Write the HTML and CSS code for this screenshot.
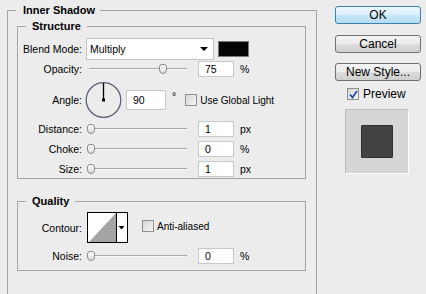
FILE: index.html
```html
<!DOCTYPE html>
<html lang="en">

<head>
    <meta charset="UTF-8">
    <title>Layer Style - Inner Shadow</title>
    <link rel="stylesheet" href="styles.css">
</head>

<body>
    <div class="left">
        <fieldset class="outer">
            <legend>Inner Shadow</legend>

            <!-- Structure -->
            <fieldset class="group structure">
                <legend>Structure</legend>
                <div class="row blend-row">
                    <span class="lbl">Blend Mode:</span>
                    <div class="select"><span>Multiply</span><span class="caret"></span></div>
                    <div class="color-swatch"></div>
                </div>
                <div class="row opacity-row">
                    <span class="lbl">Opacity:</span>
                    <div class="slider"><div class="thumb" style="left: 70px"></div></div>
                    <div class="num">75</div><span class="unit">%</span>
                </div>
                <div class="row angle-row">
                    <span class="lbl">Angle:</span>
                    <svg class="dial" width="37" height="36" viewBox="0 0 37 36">
                        <circle cx="18.5" cy="18" r="17.3" fill="none" stroke="#5c6070" stroke-width="1.3" />
                        <line x1="18.5" y1="1" x2="18.5" y2="18" stroke="#000" stroke-width="1.3" />
                        <rect x="17" y="16.5" width="3" height="3" fill="#000" />
                    </svg>
                    <div class="num angle-num">90</div>
                    <span class="deg">&deg;</span>
                    <span class="check"></span>
                    <span class="check-lbl">Use Global Light</span>
                </div>
                <div class="row dist-row">
                    <span class="lbl">Distance:</span>
                    <div class="slider"><div class="thumb" style="left: -2px"></div></div>
                    <div class="num">1</div><span class="unit">px</span>
                </div>
                <div class="row sub-row">
                    <span class="lbl">Choke:</span>
                    <div class="slider"><div class="thumb" style="left: -2px"></div></div>
                    <div class="num">0</div><span class="unit">%</span>
                </div>
                <div class="row sub-row">
                    <span class="lbl">Size:</span>
                    <div class="slider"><div class="thumb" style="left: -2px"></div></div>
                    <div class="num">1</div><span class="unit">px</span>
                </div>
            </fieldset>

            <!-- Quality -->
            <fieldset class="group quality">
                <legend>Quality</legend>
                <div class="row contour-row">
                    <span class="lbl">Contour:</span>
                    <svg class="contour" width="41" height="31" viewBox="0 0 41 31">
                        <rect x="0.5" y="0.5" width="40" height="30" fill="#fff" stroke="#000" />
                        <polygon points="2,30 29,1 29,30" fill="#a4a4a4" />
                        <line x1="29.5" y1="0" x2="29.5" y2="31" stroke="#000" />
                        <polygon points="31.5,14 37.5,14 34.5,17.5" fill="#000" />
                    </svg>
                    <span class="check aa-check"></span>
                    <span class="check-lbl">Anti-aliased</span>
                </div>
                <div class="row noise-row">
                    <span class="lbl">Noise:</span>
                    <div class="slider"><div class="thumb" style="left: -2px"></div></div>
                    <div class="num">0</div><span class="unit">%</span>
                </div>
            </fieldset>
        </fieldset>
    </div>

    <div class="right">
        <button class="btn ok">OK</button>
        <button class="btn cancel">Cancel</button>
        <button class="btn new-style">New Style...</button>
        <div class="preview-row">
            <span class="check checked">
                <svg width="9" height="9" viewBox="0 0 9 9">
                    <path d="M1 4.5 L3.5 7.5 L8 1" fill="none" stroke="#2a4c9e" stroke-width="1.8" />
                </svg>
            </span>
            <span class="preview-lbl">Preview</span>
        </div>
        <div class="preview-box">
            <div class="preview-square"></div>
        </div>
    </div>
</body>

</html>
```

FILE: styles.css
```css
* {
    box-sizing: border-box;
    margin: 0;
    padding: 0;
}

html {
    overflow: hidden;
}

body {
    font-family: "Liberation Sans", Arial, sans-serif;
    font-size: 10.5px;
    color: #000;
    background-color: #ececec;
    width: 426px;
    height: 294px;
    overflow: hidden;
    display: flex;
    align-items: flex-start;
}

/* fieldsets */
fieldset {
    border: 1px solid #a3a3a3;
    min-width: 0;
}

legend {
    font-weight: bold;
    font-size: 11px;
    line-height: 13px;
}

.outer {
    margin: 4px 0 0 7px;
    width: 310px;
    height: 291px;
    padding: 0 9px;
}

.outer > legend {
    margin-left: -1px;
    padding: 0 5px 0 7px;
}

.group {
    width: 289px;
    padding: 0;
}

.group > legend {
    margin-left: 8px;
    padding: 0 6px;
}

.structure {
    margin-top: 3px;
    padding-bottom: 1px;
}

.quality {
    margin-top: 16px;
    padding-bottom: 6px;
}

/* rows */
.row {
    display: flex;
    align-items: center;
    height: 16px;
}

.lbl {
    width: 64px;
    text-align: right;
    margin-right: 4px;
    flex-shrink: 0;
}

.blend-row {
    height: 22px;
    margin-top: 5px;
}

.opacity-row {
    margin-top: 1px;
}

.angle-row {
    height: 36px;
    margin-top: 5px;
}

.dist-row {
    margin-top: 3px;
}

.sub-row {
    margin-top: 4px;
}

.contour-row {
    height: 31px;
    margin-top: 4px;
}

.noise-row {
    margin-top: 5px;
}

/* controls */
.select {
    width: 128px;
    height: 22px;
    background: #fff;
    border: 1px solid #c4c4c4;
    display: flex;
    align-items: center;
    justify-content: space-between;
    padding: 0 4px 0 3px;
    font-size: 10.5px;
}

.caret {
    width: 0;
    height: 0;
    border-left: 4px solid transparent;
    border-right: 4px solid transparent;
    border-top: 4px solid #000;
    margin-right: 1px;
}

.color-swatch {
    width: 31px;
    height: 16px;
    margin-left: 4px;
    background: #050505;
    border: 1px solid #7a7a7a;
}

.slider {
    position: relative;
    width: 98px;
    height: 16px;
    margin-left: 3px;
}

.slider::before {
    content: "";
    display: block;
    margin-top: 7px;
    height: 1px;
    background: #a9a9a9;
    border-bottom: 1px solid #f8f8f8;
    box-sizing: content-box;
}

.thumb {
    position: absolute;
    top: 3px;
    width: 8px;
    height: 10px;
    border: 1px solid #8c8c8c;
    border-radius: 3px 3px 4px 4px;
    background: linear-gradient(#fbfbfb, #dcdcdc);
}

.num {
    width: 36px;
    height: 16px;
    margin-left: 11px;
    background: #fff;
    border: 1px solid #c8c8c8;
    padding-left: 6px;
    line-height: 14px;
    font-size: 10.5px;
}

.unit {
    margin-left: 6px;
    font-size: 10.5px;
}

.dial {
    margin-left: -1px;
    flex-shrink: 0;
}

.angle-num {
    width: 40px;
    height: 20px;
    line-height: 18px;
    margin-left: 4px;
}

.deg {
    margin-left: 6px;
    align-self: flex-start;
    margin-top: 8px;
    font-size: 10.5px;
}

.check {
    width: 12px;
    height: 12px;
    border: 1px solid #8e8f8f;
    background: linear-gradient(135deg, #d6d6d6, #f7f7f7);
    display: inline-flex;
    align-items: center;
    justify-content: center;
    flex-shrink: 0;
}

.angle-row .check {
    margin-left: 9px;
}

.check-lbl {
    margin-left: 3px;
    font-size: 10px;
}

.contour {
    margin-left: 1px;
    flex-shrink: 0;
}

.aa-check {
    margin-left: 14px;
    margin-top: -4px;
}

.contour-row .check-lbl {
    margin-top: -3px;
}

/* right column */
.right {
    margin-left: 18px;
    width: 86px;
    display: flex;
    flex-direction: column;
}

.btn {
    width: 86px;
    height: 18px;
    font-family: "Liberation Sans", Arial, sans-serif;
    font-size: 12px;
    color: #000;
    border: 1px solid #707070;
    border-radius: 3px;
    background: linear-gradient(#f3f3f3 0%, #ebebeb 50%, #dddddd 51%, #cfcfcf 100%);
    line-height: 16px;
}

.ok {
    margin-top: 6px;
    border-color: #3c7fb1;
    background: linear-gradient(#eaf6fd 0%, #d9f0fc 50%, #c4e6f8 51%, #b7ddf3 100%);
}

.cancel {
    margin-top: 11px;
}

.new-style {
    margin-top: 10px;
}

.preview-row {
    display: flex;
    align-items: center;
    margin-top: 7px;
    height: 12px;
}

.preview-row .check {
    margin-left: 12px;
}

.preview-lbl {
    margin-left: 4px;
    font-size: 12px;
}

.preview-box {
    margin: 9px 0 0 10px;
    width: 64px;
    height: 65px;
    background: #d6d6d6;
    border: 1px solid #bdbdbd;
    border-right-color: #fff;
    border-bottom-color: #fff;
    display: flex;
    align-items: center;
    justify-content: center;
}

.preview-square {
    width: 32px;
    height: 33px;
    background: #434343;
    border: 1px solid #2f2f2f;
    border-radius: 1px;
}
```
